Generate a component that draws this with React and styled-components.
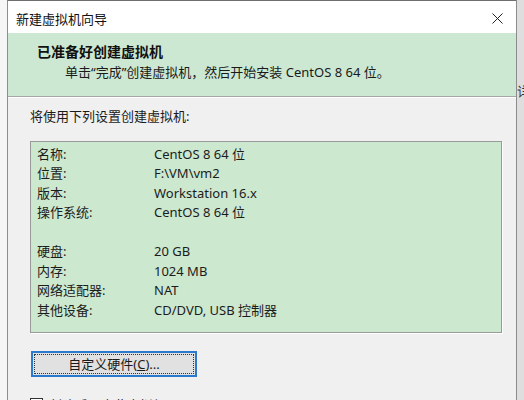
import React from "react";
import styled, { createGlobalStyle } from "styled-components";

const Global = createGlobalStyle`
  html, body { margin: 0; padding: 0; background: #f7f7f7; }
  body { font-family: "Noto Sans", "Noto Sans CJK SC", sans-serif; color: #1b1b1b; }
  #root { width: 524px; height: 400px; overflow: hidden; }
`;

const Screen = styled.div`
  display: flex;
  align-items: flex-start;
  width: 524px;
  height: 400px;
  overflow: hidden;
`;

const LeftStrip = styled.div`
  width: 7px;
  height: 100%;
  flex: none;
  background: #f6f6f6;
`;

const RightStrip = styled.div`
  width: 8px;
  height: 100%;
  flex: none;
  background: #dedede;
  border-left: 1px solid #8c8c8c;
  overflow: hidden;
  padding-top: 84px;
  font-size: 13px;
  line-height: 14px;
  color: #333;
  box-sizing: border-box;
`;

const Dialog = styled.div`
  width: 509px;
  height: 440px;
  flex: none;
  border-left: 1px solid #8e8e8e;
  border-top: 1px solid #6e6e6e;
  box-sizing: border-box;
  background: #f0f0f0;
`;

const TitleBar = styled.div`
  height: 32px;
  box-sizing: border-box;
  background: #ffffff;
  display: flex;
  align-items: center;
  justify-content: space-between;
  padding: 2px 12px 0 8px;
  font-size: 13px;
  color: #111;
`;

const CloseBtn = styled.div`
  width: 14px;
  height: 14px;
  display: flex;
  align-items: center;
  justify-content: center;
`;

const Header = styled.div`
  background: #cde8d2;
  height: 64px;
  box-sizing: border-box;
  padding: 9px 0 0 29px;
  border-bottom: 1px solid #a6a6a6;
  box-shadow: 0 1px 0 #ffffff;
`;

const HeaderTitle = styled.div`
  font-size: 14px;
  font-weight: 700;
  line-height: 20px;
  color: #111;
`;

const HeaderSub = styled.div`
  font-size: 13px;
  line-height: 20px;
  padding-left: 28px;
  color: #1a1a1a;
`;

const Body = styled.div`
  padding: 10px 0 0 22px;
`;

const Intro = styled.div`
  font-size: 13px;
  line-height: 18px;
  margin-bottom: 16px;
`;

const SummaryBox = styled.div`
  width: 472px;
  box-sizing: border-box;
  background: #cce8cf;
  border: 1px solid #9a9a9a;
  box-shadow: 1px 1px 0 #ffffff;
  padding: 2px 6px 12px 6px;
`;

const Row = styled.div`
  display: grid;
  grid-template-columns: 117px 1fr;
  height: 19.5px;
  align-items: center;
  font-size: 13px;
  line-height: 18px;
  color: #1c1c1c;
`;

const Button = styled.button`
  margin-top: 18px;
  margin-left: 1px;
  width: 166px;
  height: 26px;
  background: #e1e1e1;
  border: 2px solid #2a7bd0;
  box-sizing: border-box;
  padding: 1px;
  font-family: inherit;
  font-size: 13px;
  color: #1a1a1a;
  display: block;
`;

const FocusRing = styled.span`
  display: flex;
  align-items: center;
  justify-content: center;
  height: 100%;
  border: 1px dotted #333;
  box-sizing: border-box;
`;

const CheckRow = styled.div`
  display: flex;
  align-items: flex-start;
  gap: 6px;
  margin-top: 21px;
  font-size: 13px;
  line-height: 14px;
`;

const CheckBox = styled.span`
  width: 13px;
  height: 13px;
  box-sizing: border-box;
  border: 1px solid #333;
  background: #fff;
  flex: none;
`;

const rows = [
  ["名称:", "CentOS 8 64 位"],
  ["位置:", "F:\\VM\\vm2"],
  ["版本:", "Workstation 16.x"],
  ["操作系统:", "CentOS 8 64 位"],
  ["", ""],
  ["硬盘:", "20 GB"],
  ["内存:", "1024 MB"],
  ["网络适配器:", "NAT"],
  ["其他设备:", "CD/DVD, USB 控制器"],
];

export default function App() {
  return (
    <>
      <Global />
      <Screen>
        <LeftStrip />
        <Dialog>
          <TitleBar>
            <span>新建虚拟机向导</span>
            <CloseBtn>
              <svg width="11" height="11" viewBox="0 0 11 11">
                <path d="M0.5 0.5 L10.5 10.5 M10.5 0.5 L0.5 10.5" stroke="#222" strokeWidth="1" />
              </svg>
            </CloseBtn>
          </TitleBar>
          <Header>
            <HeaderTitle>已准备好创建虚拟机</HeaderTitle>
            <HeaderSub>单击“完成”创建虚拟机，然后开始安装 CentOS 8 64 位。</HeaderSub>
          </Header>
          <Body>
            <Intro>将使用下列设置创建虚拟机:</Intro>
            <SummaryBox>
              {rows.map(([k, v], i) => (
                <Row key={i}>
                  <span>{k}</span>
                  <span>{v}</span>
                </Row>
              ))}
            </SummaryBox>
            <Button>
              <FocusRing>
                自定义硬件(<u>C</u>)...
              </FocusRing>
            </Button>
            <CheckRow>
              <CheckBox />
              <span>创建后开启此虚拟机(P)</span>
            </CheckRow>
          </Body>
        </Dialog>
        <RightStrip>详</RightStrip>
      </Screen>
    </>
  );
}
